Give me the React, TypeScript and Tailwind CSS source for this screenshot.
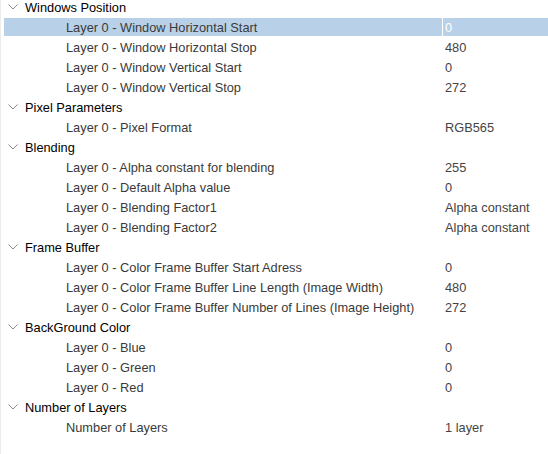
import React from "react";

type Item = { label: string; value: string };
type Group = { title: string; items: Item[] };

const groups: Group[] = [
  {
    title: "Windows Position",
    items: [
      { label: "Layer 0 - Window Horizontal Start", value: "0" },
      { label: "Layer 0 - Window Horizontal Stop", value: "480" },
      { label: "Layer 0 - Window Vertical Start", value: "0" },
      { label: "Layer 0 - Window Vertical Stop", value: "272" },
    ],
  },
  {
    title: "Pixel Parameters",
    items: [{ label: "Layer 0 - Pixel Format", value: "RGB565" }],
  },
  {
    title: "Blending",
    items: [
      { label: "Layer 0 - Alpha constant for blending", value: "255" },
      { label: "Layer 0 - Default Alpha value", value: "0" },
      { label: "Layer 0 - Blending Factor1", value: "Alpha constant" },
      { label: "Layer 0 - Blending Factor2", value: "Alpha constant" },
    ],
  },
  {
    title: "Frame Buffer",
    items: [
      { label: "Layer 0 - Color Frame Buffer Start Adress", value: "0" },
      { label: "Layer 0 - Color Frame Buffer Line Length (Image Width)", value: "480" },
      { label: "Layer 0 - Color Frame Buffer Number of Lines (Image Height)", value: "272" },
    ],
  },
  {
    title: "BackGround Color",
    items: [
      { label: "Layer 0 - Blue", value: "0" },
      { label: "Layer 0 - Green", value: "0" },
      { label: "Layer 0 - Red", value: "0" },
    ],
  },
  {
    title: "Number of Layers",
    items: [{ label: "Number of Layers", value: "1 layer" }],
  },
];

function Chevron() {
  return (
    <svg width="10" height="6" viewBox="0 0 10 6" className="ml-[7px] mr-[7px] shrink-0">
      <path d="M0.5 0.5 L5 5 L9.5 0.5" fill="none" stroke="#8a8a8a" strokeWidth="1" />
    </svg>
  );
}

export default function App() {
  return (
    <div
      className="w-[548px] h-[454px] overflow-hidden bg-white border-l border-[#ececec]"
      style={{ fontFamily: '"Liberation Sans", Arial, sans-serif' }}
    >
      <div className="-mt-[3px] flex flex-col text-[12.8px] leading-[18px]">
        {groups.map((g, gi) => (
          <React.Fragment key={g.title}>
            <div className="h-[20px] flex items-center text-black">
              <Chevron />
              <span className="pt-[2px]">{g.title}</span>
            </div>
            {g.items.map((it, ii) => {
              const selected = gi === 0 && ii === 0;
              return (
                <div key={it.label} className="h-[20px] flex items-stretch py-[1px] pl-[3px]">
                  <div
                    className={
                      "flex flex-1 items-center " + (selected ? "bg-[#b9d1e8]" : "")
                    }
                  >
                    <div className="w-[438px] pl-[62px] pt-[2px] text-[#3a3a3a] whitespace-nowrap">{it.label}</div>
                    <div
                      className={
                        "flex-1 h-full flex items-center pl-[2px] pt-[2px] whitespace-nowrap " +
                        (selected ? "border-l border-white text-white" : "border-l border-transparent text-[#444]")
                      }
                    >
                      {it.value}
                    </div>
                  </div>
                </div>
              );
            })}
          </React.Fragment>
        ))}
      </div>
    </div>
  );
}
